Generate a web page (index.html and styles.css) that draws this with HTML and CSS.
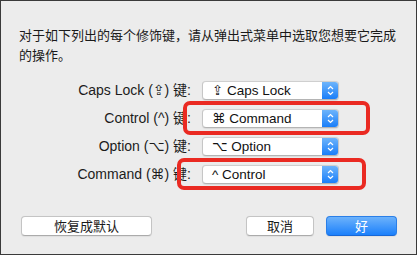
FILE: index.html
```html
<!DOCTYPE html>
<html lang="zh">
<head>
<meta charset="utf-8">
<link rel="stylesheet" href="styles.css">
</head>
<body>
<div class="dialog">
  <p class="intro">对于如下列出的每个修饰键，请从弹出式菜单中选取您想要它完成<br>的操作。</p>
  <div class="rows">
    <div class="label">Caps Lock (⇪) 键:</div>
    <div class="popup"><span class="val">⇪ Caps Lock</span><span class="step"><svg width="7" height="11" viewBox="0 0 7 11"><path d="M1 4 L3.5 1.5 L6 4 M1 7 L3.5 9.5 L6 7" fill="none" stroke="#fff" stroke-width="1.2"/></svg></span></div>
    <div class="label">Control (^) 键:</div>
    <div class="popup"><span class="val">⌘ Command</span><span class="step"><svg width="7" height="11" viewBox="0 0 7 11"><path d="M1 4 L3.5 1.5 L6 4 M1 7 L3.5 9.5 L6 7" fill="none" stroke="#fff" stroke-width="1.2"/></svg></span></div>
    <div class="label">Option (⌥) 键:</div>
    <div class="popup"><span class="val">⌥ Option</span><span class="step"><svg width="7" height="11" viewBox="0 0 7 11"><path d="M1 4 L3.5 1.5 L6 4 M1 7 L3.5 9.5 L6 7" fill="none" stroke="#fff" stroke-width="1.2"/></svg></span></div>
    <div class="label">Command (⌘) 键:</div>
    <div class="popup"><span class="val">^ Control</span><span class="step"><svg width="7" height="11" viewBox="0 0 7 11"><path d="M1 4 L3.5 1.5 L6 4 M1 7 L3.5 9.5 L6 7" fill="none" stroke="#fff" stroke-width="1.2"/></svg></span></div>
  </div>
  <div class="buttons">
    <button class="btn btn-restore">恢复成默认</button>
    <span class="spacer"></span>
    <button class="btn btn-cancel">取消</button>
    <button class="btn btn-ok">好</button>
  </div>
  <div class="mark mark-1"></div>
  <div class="mark mark-2"></div>
</div>
</body>
</html>
```
FILE: styles.css
```css
html, body {
  margin: 0;
  padding: 0;
  background: #ececec;
}
.dialog {
  position: relative;
  box-sizing: border-box;
  width: 417px;
  height: 255px;
  border: 1px solid #3a3a3a;
  background: #ececec;
  font-family: "Liberation Sans", "DejaVu Sans", "Noto Sans CJK SC", sans-serif;
  color: #1c1c1c;
  overflow: hidden;
}
.intro {
  margin: 24px 0 0 18px;
  font-family: "Noto Sans CJK SC", sans-serif;
  font-size: 13px;
  line-height: 20px;
  white-space: nowrap;
  color: #1a1a1a;
}
.rows {
  display: grid;
  grid-template-columns: 190px 137px;
  grid-auto-rows: 19px;
  column-gap: 11px;
  row-gap: 9px;
  margin-top: 16px;
}
.label {
  text-align: right;
  font-size: 14px;
  line-height: 19px;
  white-space: nowrap;
  font-family: "Liberation Sans", "DejaVu Sans", "Noto Sans CJK SC", sans-serif;
}
.popup {
  display: flex;
  box-sizing: border-box;
  height: 19px;
  background: #fff;
  border: 1px solid #c6c6c6;
  border-top-color: #cfcfcf;
  border-bottom-color: #b4b4b4;
  border-radius: 4px;
  overflow: hidden;
  box-shadow: 0 0.5px 1px rgba(0,0,0,0.08);
}
.val {
  flex: 1;
  padding-left: 9px;
  font-size: 13.5px;
  line-height: 17px;
  color: #111;
  white-space: nowrap;
  font-family: "Liberation Sans", "DejaVu Sans", sans-serif;
}
.step {
  width: 16px;
  display: flex;
  align-items: center;
  justify-content: center;
  background: linear-gradient(#6db4fb, #1a7ef9);
}
.buttons {
  display: flex;
  align-items: center;
  margin-top: 32px;
  padding: 0 19px 0 20px;
}
.spacer { flex: 1; }
.btn {
  box-sizing: border-box;
  height: 20px;
  margin: 0;
  padding: 0;
  border-radius: 4px;
  font-family: "Noto Sans CJK SC", sans-serif;
  font-size: 13px;
  line-height: 18px;
  color: #1a1a1a;
  background: #fff;
  border: 1px solid #c4c4c4;
  border-bottom-color: #ababab;
  box-shadow: 0 0.5px 1px rgba(0,0,0,0.06);
}
.btn-restore { width: 131px; }
.btn-cancel { width: 68px; }
.btn-ok {
  width: 71px;
  margin-left: 12px;
  color: #fff;
  border: 1px solid #2a7fe8;
  border-bottom-color: #1767d6;
  background: linear-gradient(#6cb2fb, #1b80fb);
}
.mark {
  position: absolute;
  box-sizing: border-box;
  border: 4px solid #ea2a22;
  border-radius: 7px;
}
.mark-1 {
  left: 182px;
  top: 100px;
  width: 187px;
  height: 34px;
}
.mark-2 {
  left: 176px;
  top: 157px;
  width: 189px;
  height: 32px;
}
```
